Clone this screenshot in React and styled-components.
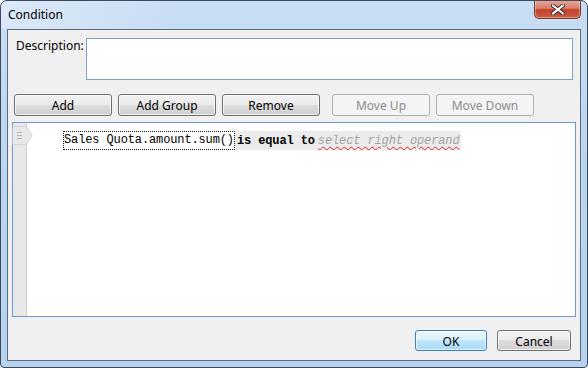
import React from "react";
import styled, { createGlobalStyle } from "styled-components";

const Global = createGlobalStyle`
  html, body { margin: 0; padding: 0; background: #ffffff; }
  body { font-family: "Noto Sans", "Open Sans", sans-serif; }
  * { box-sizing: border-box; }
`;

const Frame = styled.div`
  width: 588px;
  height: 368px;
  display: flex;
  flex-direction: column;
  border: 1px solid #3d4a59;
  border-radius: 7px 7px 4px 4px;
  padding-bottom: 6px;
  background: linear-gradient(180deg, #c9def4 0%, #bcd6f1 40%, #b6d2ef 100%);
  overflow: hidden;
`;

const TitleBar = styled.div`
  height: 28px;
  display: flex;
  align-items: flex-start;
  justify-content: space-between;
  padding: 0 6px 0 7px;
  background: linear-gradient(90deg, rgba(255,255,255,0.35) 0%, rgba(255,255,255,0) 30%);
`;

const Title = styled.div`
  font-family: "Noto Sans", "Open Sans", sans-serif;
  font-size: 12px;
  line-height: 16px;
  margin-top: 6px;
  color: #000;
`;

const CloseButton = styled.div`
  width: 47px;
  height: 19px;
  margin-top: -1px;
  border: 1px solid #6e3a33;
  border-top: none;
  border-radius: 0 0 5px 5px;
  background: linear-gradient(180deg, #e9a99c 0%, #d9806e 45%, #c0412b 55%, #cf5b43 100%);
  box-shadow: inset 0 0 0 1px rgba(255,255,255,0.35);
  display: flex;
  align-items: center;
  justify-content: center;
`;

const Client = styled.div`
  flex: 1;
  margin: 0 6px;
  border: 1px solid #5a6b7e;
  background: #f0f0f0;
  display: flex;
  flex-direction: column;
`;

const DescRow = styled.div`
  display: flex;
  margin: 8px 7px 0 8px;
`;

const Label = styled.div`
  width: 70px;
  font-size: 12px;
  line-height: 16px;
  color: #000;
`;

const TextBox = styled.div`
  flex: 1;
  height: 42px;
  background: #fff;
  border: 1px solid #7c9fd0;
`;

const ButtonRow = styled.div`
  display: flex;
  gap: 6px;
  margin: 14px 0 0 6px;
`;

const Button = styled.div`
  width: ${(p) => p.$w || 98}px;
  height: ${(p) => p.$h || 22}px;
  margin-left: ${(p) => p.$ml || 0}px;
  display: flex;
  align-items: center;
  justify-content: center;
  padding-top: 1px;
  font-size: 12px;
  color: ${(p) => (p.$disabled ? "#8d8d8d" : "#000")};
  border: 1px solid ${(p) => (p.$disabled ? "#adb2b5" : p.$default ? "#3c7fb1" : "#707070")};
  border-radius: 3px;
  background: ${(p) =>
    p.$disabled
      ? "#f4f4f4"
      : p.$default
      ? "linear-gradient(180deg, #eaf6fd 0%, #d9f0fc 50%, #bee6fd 50%, #a7d9f5 100%)"
      : "linear-gradient(180deg, #f2f2f2 0%, #ebebeb 50%, #dddddd 50%, #cfcfcf 100%)"};
  box-shadow: inset 0 0 0 1px ${(p) => (p.$disabled ? "transparent" : "rgba(255,255,255,0.7)")};
`;

const Editor = styled.div`
  flex: 1;
  margin: 6px 4px 0 4px;
  border: 1px solid #6f98d2;
  background: #fff;
  display: flex;
`;

const Gutter = styled.div`
  width: 14px;
  background: #e8e8e8;
  border-right: 1px solid #cfcfcf;
  padding-top: 3px;
  overflow: visible;
`;

const Marker = styled.svg`
  display: block;
  overflow: visible;
`;

const Body = styled.div`
  flex: 1;
  padding: 3px 0 0 36px;
`;

const Line = styled.div`
  display: inline-flex;
  align-items: center;
  height: 19px;
  padding-right: 2px;
  background: #ebebeb;
  font-family: "Liberation Mono", "DejaVu Sans Mono", monospace;
  font-size: 12px;
  letter-spacing: -0.12px;
  white-space: pre;
`;

const Operand = styled.span`
  height: 19px;
  line-height: 17px;
  border: 1px dotted #1a1a1a;
  background: #ffffff;
  color: #000;
`;

const Keyword = styled.span`
  font-weight: bold;
  color: #000;
  margin-left: 2px;
`;

const Placeholder = styled.span`
  margin-left: 3px;
  font-style: italic;
  color: #a3a3a3;
  text-decoration: underline wavy #e02020;
  text-decoration-thickness: 1px;
  text-underline-offset: 2px;
`;

const Footer = styled.div`
  display: flex;
  justify-content: flex-end;
  gap: 10px;
  margin: 13px 9px 9px 0;
`;

export default function App() {
  return (
    <>
      <Global />
      <Frame>
        <TitleBar>
          <Title>Condition</Title>
          <CloseButton>
            <svg width="14" height="11" viewBox="0 0 14 11">
              <path
                d="M2 1.5 L12 9.5 M12 1.5 L2 9.5"
                stroke="#3a2a28"
                strokeWidth="4"
                strokeLinecap="square"
              />
              <path
                d="M2 1.5 L12 9.5 M12 1.5 L2 9.5"
                stroke="#ffffff"
                strokeWidth="2"
                strokeLinecap="square"
              />
            </svg>
          </CloseButton>
        </TitleBar>
        <Client>
          <DescRow>
            <Label>Description:</Label>
            <TextBox />
          </DescRow>
          <ButtonRow>
            <Button>Add</Button>
            <Button>Add Group</Button>
            <Button>Remove</Button>
            <Button $disabled $ml={6}>Move Up</Button>
            <Button $disabled>Move Down</Button>
          </ButtonRow>
          <Editor>
            <Gutter>
              <Marker width="20" height="19" viewBox="0 0 20 19">
                <path d="M-0.5 0.5 H13.5 L19 9.5 L13.5 18.5 H-0.5" fill="#e8e8e8" stroke="#d4d4d4" />
                <path d="M4 6.5 H9 M4 9.5 H9 M4 12.5 H9" stroke="#b4b4b4" strokeWidth="1" />
              </Marker>
            </Gutter>
            <Body>
              <Line>
                <Operand>Sales Quota.amount.sum()</Operand>
                <Keyword>is equal to</Keyword>
                <Placeholder>select right operand</Placeholder>
              </Line>
            </Body>
          </Editor>
          <Footer>
            <Button $default $w={72} $h={21}>OK</Button>
            <Button $w={74} $h={21}>Cancel</Button>
          </Footer>
        </Client>
      </Frame>
    </>
  );
}
